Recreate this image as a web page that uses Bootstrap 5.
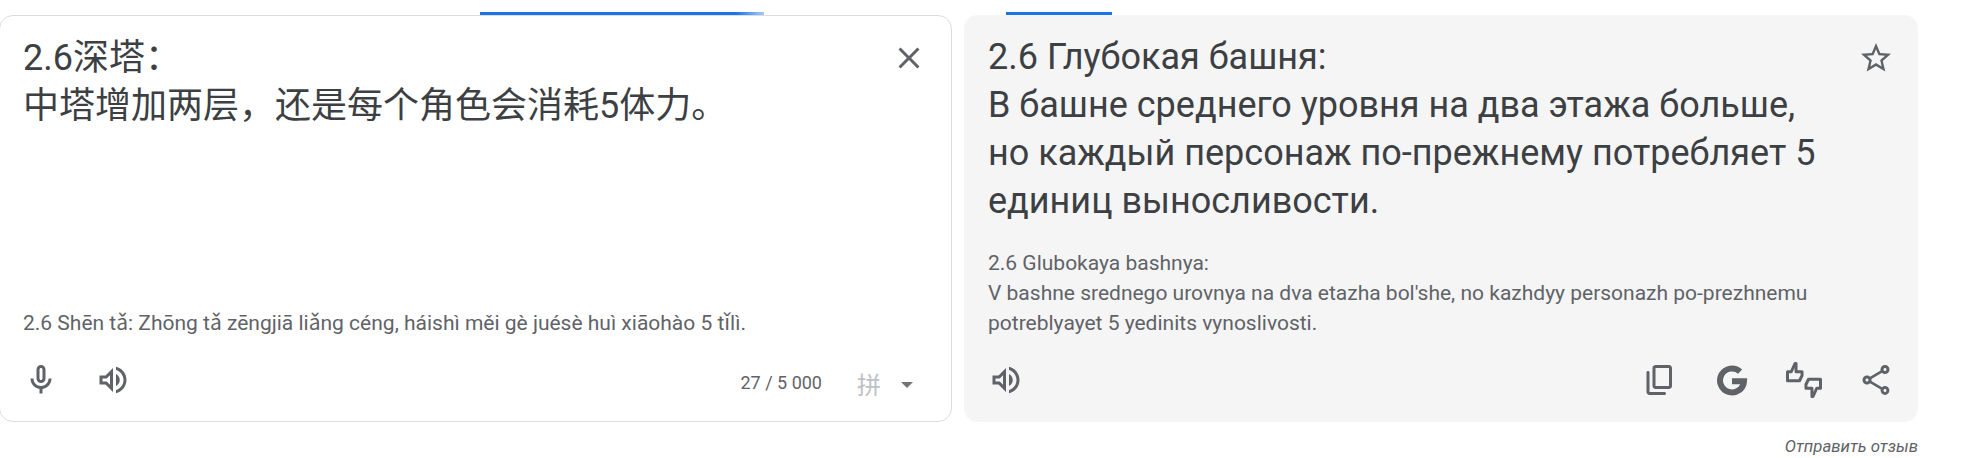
<!DOCTYPE html>
<html lang="ru">
<head>
<meta charset="utf-8">
<title>Перевод</title>
<link rel="stylesheet" href="https://cdn.jsdelivr.net/npm/bootstrap@5.3.0/dist/css/bootstrap.min.css">
<style>
html,body{height:458px;overflow:hidden;background:#fff}
body{font-family:Roboto,"Noto Sans CJK SC",sans-serif;color:#3c4043}
.tr-wrap{padding-top:12px;padding-right:52px;gap:12px}
.tr-col-src{width:952px}
.tr-col-dst{width:954px}
.tr-bar{height:3px;background:#1a73e8}
.tr-bar-src{width:284px;margin-left:480px;background:linear-gradient(90deg,#1a73e8 90%,#a8c7fa 100%)}
.tr-bar-dst{width:106px;margin-left:42px}
.tr-panel{height:407px;border-radius:14px}
.tr-panel-src{background:#fff;border:1px solid #dadce0;padding:18px 24px 23px 23px;margin-left:-1px}
.tr-panel-dst{background:#f5f5f5;padding:18px 24px 24px 24px}
.tr-main{font-size:36px;line-height:48px;color:#3c4043}
.tr-main-dst{width:850px}
.tr-roman{font-size:21px;line-height:30px;color:#5f6368;margin-bottom:24px}
.tr-roman-dst{width:850px}
.tr-tools{height:36px}
.tr-ic{width:36px;height:36px;fill:#5f6368;flex:none;display:block}
.tr-top{margin-top:6px}
.tr-top-dst{margin-top:7px}
.tr-gap{gap:36px}
.tr-count{font-size:18px;color:#5f6368;margin-right:35px;margin-top:5px}
.tr-pin{font-size:24px;line-height:24px;color:#bdc1c6;margin-top:11px;margin-right:20px}
.tr-caret{width:0;height:0;border-left:6px solid transparent;border-right:6px solid transparent;border-top:6px solid #70757a;margin-top:9px;margin-right:14px}
.tr-fb{font-size:16.8px;line-height:24px;color:#5f6368;margin-top:12px}
</style>
</head>
<body>
<div class="d-flex tr-wrap">
  <div class="tr-col-src">
    <div class="tr-bar tr-bar-src"></div>
    <div class="tr-panel tr-panel-src d-flex flex-column">
      <div class="d-flex justify-content-between flex-grow-1">
        <div class="tr-main">2.6深塔：<br>中塔增加两层，还是每个角色会消耗5体力。</div>
        <svg class="tr-ic tr-top" viewBox="0 0 24 24"><path d="M19 6.41L17.59 5 12 10.59 6.41 5 5 6.41 10.59 12 5 17.59 6.41 19 12 13.41 17.59 19 19 17.59 13.41 12z"/></svg>
      </div>
      <div class="tr-roman">2.6 Shēn tǎ: Zhōng tǎ zēngjiā liǎng céng, háishì měi gè juésè huì xiāohào 5 tǐlì.</div>
      <div class="d-flex align-items-center tr-tools">
        <div class="d-flex tr-gap">
          <svg class="tr-ic" viewBox="0 0 24 24"><path d="M12 14c1.66 0 3-1.34 3-3V5c0-1.66-1.34-3-3-3S9 3.34 9 5v6c0 1.66 1.34 3 3 3zm-1-9c0-.55.45-1 1-1s1 .45 1 1v6c0 .55-.45 1-1 1s-1-.45-1-1V5zm6 6c0 2.76-2.24 5-5 5s-5-2.24-5-5H5c0 3.53 2.61 6.43 6 6.92V21h2v-3.08c3.39-.49 6-3.39 6-6.92h-2z"/></svg>
          <svg class="tr-ic" viewBox="0 0 24 24"><path d="M3 9v6h4l5 5V4L7 9H3zm7-.17v6.34L7.83 13H5v-2h2.83L10 8.83zM16.5 12c0-1.77-1.02-3.29-2.5-4.03v8.05c1.48-.73 2.5-2.25 2.5-4.02zM14 3.23v2.06c2.89.86 5 3.54 5 6.71s-2.11 5.85-5 6.71v2.06c4.01-.91 7-4.49 7-8.77 0-4.28-2.99-7.86-7-8.77z"/></svg>
        </div>
        <div class="ms-auto tr-count">27 / 5 000</div>
        <div class="tr-pin">拼</div>
        <div class="tr-caret"></div>
      </div>
    </div>
  </div>
  <div class="tr-col-dst">
    <div class="tr-bar tr-bar-dst"></div>
    <div class="tr-panel tr-panel-dst d-flex flex-column">
      <div class="d-flex justify-content-between flex-grow-1">
        <div class="tr-main tr-main-dst">2.6 Глубокая башня:<br>В башне среднего уровня на два этажа больше, но каждый персонаж по-прежнему потребляет 5 единиц выносливости.</div>
        <svg class="tr-ic tr-top-dst" viewBox="0 0 24 24"><path d="M22 9.24l-7.19-.62L12 2 9.19 8.63 2 9.24l5.46 4.73L5.82 21 12 17.27 18.18 21l-1.63-7.03L22 9.24zM12 15.4l-3.76 2.27 1-4.28-3.32-2.88 4.38-.38L12 6.1l1.71 4.04 4.38.38-3.32 2.88 1 4.28L12 15.4z"/></svg>
      </div>
      <div class="tr-roman tr-roman-dst">2.6 Glubokaya bashnya:<br>V bashne srednego urovnya na dva etazha bol'she, no kazhdyy personazh po-prezhnemu potreblyayet 5 yedinits vynoslivosti.</div>
      <div class="d-flex align-items-center justify-content-between tr-tools">
        <svg class="tr-ic" viewBox="0 0 24 24"><path d="M3 9v6h4l5 5V4L7 9H3zm7-.17v6.34L7.83 13H5v-2h2.83L10 8.83zM16.5 12c0-1.77-1.02-3.29-2.5-4.03v8.05c1.48-.73 2.5-2.25 2.5-4.02zM14 3.23v2.06c2.89.86 5 3.54 5 6.71s-2.11 5.85-5 6.71v2.06c4.01-.91 7-4.49 7-8.77 0-4.28-2.99-7.86-7-8.77z"/></svg>
        <div class="d-flex tr-gap">
          <svg class="tr-ic" viewBox="0 0 24 24"><path d="M15 20H5V7c0-.55-.45-1-1-1s-1 .45-1 1v13c0 1.1.9 2 2 2h10c.55 0 1-.45 1-1s-.45-1-1-1zm5-4V4c0-1.1-.9-2-2-2H9c-1.1 0-2 .9-2 2v12c0 1.1.9 2 2 2h9c1.1 0 2-.9 2-2zm-2 0H9V4h9v12z"/></svg>
          <svg class="tr-ic" viewBox="0 0 24 24"><path fill="none" stroke="#5f6368" stroke-width="4" d="M17.4 6.4A8 8 0 1 0 20 12.8H12"/></svg>
          <svg class="tr-ic" viewBox="0 0 24 24"><path fill="none" stroke="#5f6368" stroke-width="2" stroke-linejoin="round" d="M1 6.5h2.5L6 1h.7v5.5h4V9L9 12.5H1zM23 17.5h-2.5L18 23h-.7v-5.5h-4V15L15 11.5h8z"/></svg>
          <svg class="tr-ic" viewBox="0 0 24 24"><path d="M18 16.08c-.76 0-1.44.3-1.96.77L8.91 12.7c.05-.23.09-.46.09-.7s-.04-.47-.09-.7l7.05-4.11c.54.5 1.25.81 2.04.81 1.66 0 3-1.34 3-3s-1.34-3-3-3-3 1.34-3 3c0 .24.04.47.09.7L8.04 9.81C7.5 9.31 6.79 9 6 9c-1.66 0-3 1.34-3 3s1.34 3 3 3c.79 0 1.5-.31 2.04-.81l7.12 4.16c-.05.21-.08.43-.08.65 0 1.61 1.31 2.92 2.92 2.92 1.61 0 2.92-1.31 2.92-2.92s-1.31-2.92-2.92-2.92zM18 4c.55 0 1 .45 1 1s-.45 1-1 1-1-.45-1-1 .45-1 1-1zM6 13c-.55 0-1-.45-1-1s.45-1 1-1 1 .45 1 1-.45 1-1 1zm12 7.02c-.55 0-1-.45-1-1s.45-1 1-1 1 .45 1 1-.45 1-1 1z"/></svg>
        </div>
      </div>
    </div>
    <div class="tr-fb fst-italic text-end">Отправить отзыв</div>
  </div>
</div>
<script src="https://cdn.jsdelivr.net/npm/bootstrap@5.3.0/dist/js/bootstrap.bundle.min.js"></script>
</body>
</html>
